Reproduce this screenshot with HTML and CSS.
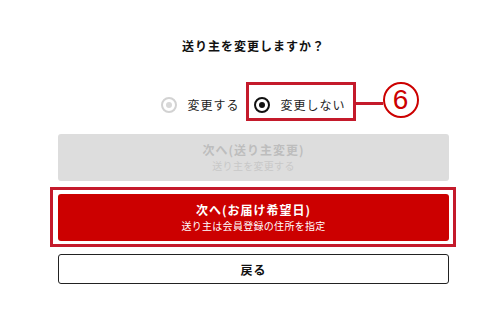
FILE: index.html
```html
<!DOCTYPE html>
<html lang="ja">
<head>
<meta charset="utf-8">
<title>送り主を変更しますか？</title>
<link rel="stylesheet" href="styles.css">
</head>
<body>
<div class="dialog">
  <h1 class="title">送り主を変更しますか？</h1>
  <div class="choices">
    <label class="choice choice--off"><span class="radio"></span><span class="choice-text">変更する</span></label>
    <label class="choice choice--on"><span class="radio radio--checked"></span><span class="choice-text">変更しない</span><span class="callout-line"></span><span class="callout-num">6</span></label>
  </div>
  <div class="actions">
    <div class="btn btn--disabled"><span class="btn-main">次へ(送り主変更)</span><span class="btn-sub">送り主を変更する</span></div>
    <div class="btn btn--primary"><span class="btn-main">次へ(お届け希望日)</span><span class="btn-sub">送り主は会員登録の住所を指定</span></div>
    <div class="btn btn--back"><span class="btn-main">戻る</span></div>
  </div>
</div>
</body>
</html>
```

FILE: styles.css
```css
body {
  margin: 0;
  background: #fff;
  font-family: "Noto Sans CJK JP", "Noto Sans", sans-serif;
  color: #222;
}

.dialog {
  width: 391px;
  margin-left: 58px;
  padding-top: 37px;
}

.title {
  margin: 0;
  font-size: 12px;
  line-height: 18px;
  font-weight: 700;
  letter-spacing: 1px;
  text-align: center;
  color: #111;
}

.choices {
  display: flex;
  justify-content: center;
  align-items: center;
  gap: 14px;
  margin-top: 40px;
  height: 20px;
}

.choice {
  position: relative;
  display: flex;
  align-items: center;
  gap: 10px;
  font-size: 12px;
  line-height: 20px;
  letter-spacing: 1px;
  color: #222;
}

.choice--on {
  gap: 11px;
}

.choice--on::before {
  content: "";
  position: absolute;
  left: -8px;
  right: -10px;
  top: -13px;
  bottom: -6px;
  border: 3px solid #c41a2b;
}

.radio {
  width: 16px;
  height: 16px;
  box-sizing: border-box;
  border-radius: 50%;
  border: 2px solid #d2d2d2;
  display: flex;
  align-items: center;
  justify-content: center;
}

.radio::after {
  content: "";
  width: 6px;
  height: 6px;
  border-radius: 50%;
  background: #d8d8d8;
}

.radio--checked {
  border-color: #111;
}

.radio--checked::after {
  background: #111;
}

.callout-line {
  position: absolute;
  left: calc(100% + 10px);
  top: 7px;
  width: 27px;
  height: 3px;
  background: #c41a2b;
}

.callout-num {
  position: absolute;
  left: calc(100% + 37px);
  top: -13px;
  width: 36px;
  height: 36px;
  box-sizing: border-box;
  border: 2px solid #cc0000;
  border-radius: 50%;
  display: flex;
  align-items: center;
  justify-content: center;
  font-family: "Liberation Sans", sans-serif;
  font-size: 28px;
  line-height: 1;
  letter-spacing: 0;
  color: #cc0000;
}

.actions {
  margin-top: 19px;
  display: flex;
  flex-direction: column;
  gap: 13px;
}

.btn {
  display: flex;
  flex-direction: column;
  align-items: center;
  border-radius: 3px;
  padding: 7px 0 8px;
  text-align: center;
}

.btn-main {
  font-size: 12px;
  font-weight: 700;
  line-height: 17px;
  letter-spacing: 1px;
}

.btn-sub {
  font-size: 10px;
  line-height: 14px;
  margin-top: 1px;
  letter-spacing: 0.3px;
}

.btn--disabled {
  background: #dddddd;
  color: #bdbdbd;
}

.btn--disabled .btn-sub {
  color: #c8c8c8;
}

.btn--primary {
  position: relative;
  background: #cc0000;
  color: #fff;
}

.btn--primary::before {
  content: "";
  position: absolute;
  left: -8px;
  right: -7px;
  top: -7px;
  bottom: -6px;
  border: 3px solid #c41a2b;
}

.btn--back {
  box-sizing: border-box;
  height: 30px;
  padding: 0;
  justify-content: center;
  border: 1px solid #222;
  color: #111;
}
```
